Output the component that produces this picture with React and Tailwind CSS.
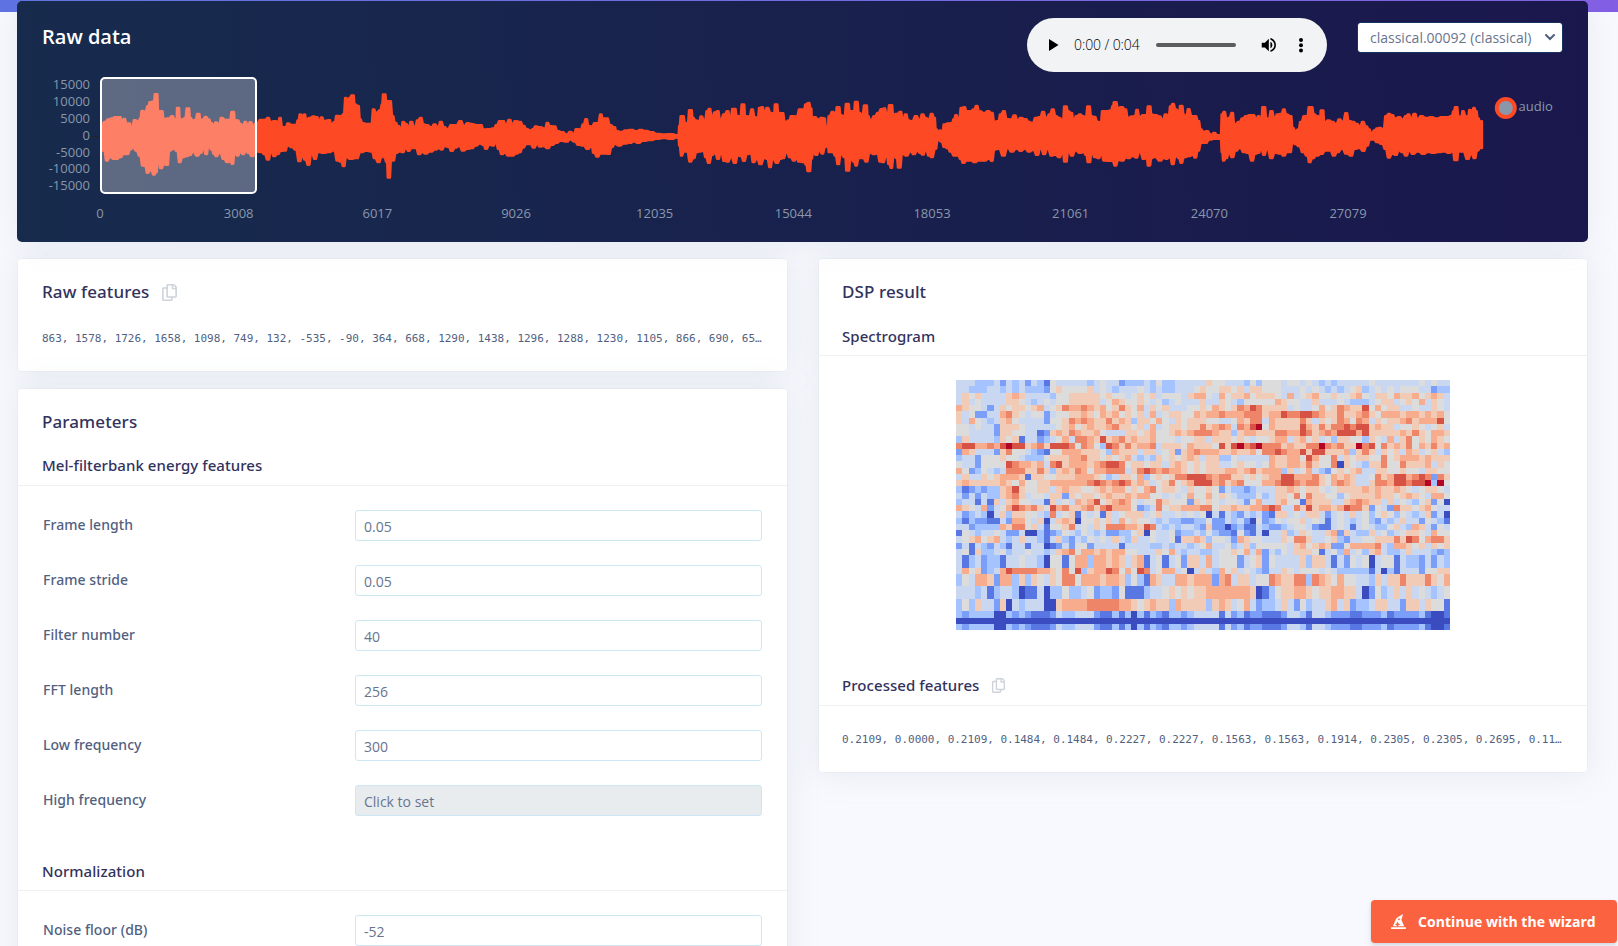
import React from "react";
import { FaRegCopy, FaHatWizard } from "react-icons/fa";

/* ---------- waveform envelope: "x,y" pairs per segment ---------- */
const SEGMENTS = [
  {
    x0: 0,
    k: 2.904,
    top: "295,370;305,362;315,355;325,352;335,348;348,348;355,366;361,353;368,367;375,367;383,381;391,357;402,361;408,352;412,329;422,331;430,315;436,303;447,301;451,279;456,279;459,330;470,330;476,353;490,352;500,345;508,355;513,354;515,320;519,320;522,354;530,355;538,350;544,322;548,322;552,350;560,358;568,356;574,338;578,338;582,360;590,355;597,347;606,355;613,366;620,374;627,364;635,370;644,350;655,356;668,356;674,332;678,332;682,357;690,358;698,368;706,375;712,362;720,373;727,363;735,372;745,366;758,356;768,356;779,350;786,362;798,360;808,362;813,350;820,378;830,378;836,367;848,371;860,371;866,358;872,340;880,344;884,340;890,355;900,350;910,346;920,348;926,362;934,349;942,360;950,358;957,357;962,372;972,363;978,344;990,345;998,340;1004,290;1010,300;1016,290;1022,283;1026,283;1030,310;1040,314;1046,355;1052,366;1065,368;1078,368;1085,325;1092,335;1104,328;1110,310;1113,280;1118,280;1122,300;1133,300;1140,345;1148,365;1157,375;1164,390;1171,362;1178,368;1187,378;1194,362;1205,380;1213,358;1222,350;1230,370;1240,372;1252,378;1262,370;1272,378;1280,362;1290,378;1300,384;1311,372;1325,372;1337,360;1348,374;1358,366;1368,368;1376,370;1384,372;1397,372;1404,385;1420,384;1434,382;1442,372;1452,360;1462,360;1468,372;1480,356;1488,370;1497,360;1510,362;1520,374;1530,384;1540,388;1548,384;1556,376",
    bottom: "295,455;302,455;310,485;320,475;330,480;338,480;350,475;358,466;370,466;378,452;386,446;396,455;406,470;415,500;422,502;428,522;438,514;447,527;454,520;458,478;468,508;476,497;486,498;492,455;505,450;514,456;522,490;530,475;542,472;552,468;560,458;573,470;583,462;590,445;599,466;606,440;615,452;622,465;628,472;638,462;650,480;660,490;668,488;675,495;682,460;690,470;698,458;706,466;714,456;722,462;732,472;745,458;760,460;768,466;778,482;788,458;796,472;806,466;816,456;828,455;835,440;848,445;858,452;870,487;878,468;886,482;896,498;905,462;915,480;924,460;940,462;955,460;970,455;980,485;990,488;998,502;1006,475;1018,480;1035,478;1048,460;1065,456;1080,458;1088,478;1100,490;1108,475;1115,475;1124,490;1127,536;1131,536;1136,485;1142,485;1150,462;1160,458;1170,460;1178,446;1187,456;1195,448;1208,448;1217,466;1228,460;1235,464;1250,458;1265,452;1275,448;1282,452;1292,442;1302,444;1312,456;1322,446;1334,442;1344,455;1358,450;1370,448;1382,440;1394,434;1404,438;1411,450;1422,438;1432,440;1440,430;1448,450;1458,466;1466,462;1476,470;1488,470;1500,464;1510,460;1518,446;1530,436;1540,436;1550,446;1560,436",
  },
  {
    x0: 540,
    k: 2.904,
    top: "0,378;15,382;21,365;30,375;42,376;52,390;65,393;78,400;88,392;98,398;106,384;118,385;126,370;134,354;142,375;150,376;160,366;168,366;177,340;183,352;194,352;204,372;216,378;222,390;235,392;250,388;265,386;280,390;292,386;305,389;325,393;340,398;360,400;378,399;402,402;405,375;410,345;415,345;422,365;428,370;435,327;439,327;444,350;452,358;462,360;468,346;478,360;486,330;492,323;500,350;508,334;516,330;524,358;535,340;545,330;552,352;561,323;566,323;572,345;582,345;587,310;592,310;596,345;608,346;616,325;624,348;632,350;638,320;645,318;652,336;660,320;670,335;680,338;683,310;688,310;692,335;704,336;712,362;724,358;730,345;745,346;755,325;766,325;772,310;780,305;787,322;790,350;798,348;808,355;818,350;826,352;830,375;834,390;840,345;850,332;858,350;863,318;868,318;873,342;884,345;890,308;895,308;900,330;912,330;916,302;921,302;926,335;936,340;943,313;948,313;952,345;960,358;972,345;982,335;992,324;1000,322;1008,345;1016,312;1021,312;1026,340;1036,338;1047,332;1054,360;1062,340;1070,358;1080,360;1092,345;1102,358;1111,340;1120,350;1128,355;1138,338;1145,350;1150,385;1158,398;1162,388;1168,395;1174,370;1185,367;1196,366;1202,355;1208,342;1216,358;1224,320;1232,318;1240,330;1250,330;1260,325;1268,314;1276,330;1290,335;1302,330;1312,335;1320,362;1330,360;1338,340;1347,330;1356,354;1368,355;1378,343;1388,358;1396,350;1410,354;1420,362;1430,365;1440,350;1452,348;1461,332;1470,352;1480,340;1489,325;1498,345;1508,350;1518,360;1524,316;1528,316;1533,330;1543,335;1550,362;1558,345",
    bottom: "0,443;10,442;22,448;34,438;48,432;60,426;78,428;88,422;100,428;112,438;125,440;138,450;150,442;156,462;167,473;176,464;188,464;200,465;208,445;218,436;230,440;245,434;262,432;272,428;285,432;300,426;320,424;340,420;360,418;380,420;402,416;405,440;411,470;418,458;427,458;436,488;446,478;455,460;465,458;474,456;482,475;490,492;500,468;508,462;517,480;526,460;535,486;545,488;555,475;566,492;575,470;584,472;592,486;602,466;612,464;620,490;630,480;640,496;652,478;660,480;668,505;676,480;688,492;698,480;706,478;716,460;726,475;738,485;745,475;752,488;766,490;774,498;778,517;783,517;788,480;794,460;802,468;812,455;820,464;828,445;834,420;840,460;850,460;858,470;866,496;874,466;886,475;891,515;896,515;902,480;912,488;918,500;926,478;938,478;948,488;958,462;970,466;980,464;988,488;996,490;1006,468;1014,496;1020,507;1028,470;1036,478;1041,506;1045,506;1052,465;1064,470;1076,458;1086,466;1096,456;1104,462;1112,467;1120,452;1130,470;1138,475;1148,450;1156,422;1166,428;1174,444;1184,448;1192,458;1204,470;1214,470;1222,480;1229,492;1240,485;1252,485;1262,490;1275,485;1290,485;1304,480;1312,486;1320,452;1332,450;1346,470;1358,448;1370,458;1384,450;1396,456;1408,450;1420,458;1432,454;1444,468;1454,448;1464,466;1474,450;1486,470;1496,468;1508,475;1518,458;1524,488;1528,488;1534,456;1545,470;1555,455",
  },
  {
    x0: 1080,
    k: 2.914,
    top: "0,340;8,345;17,348;23,316;27,316;33,345;42,347;52,362;60,364;66,330;78,330;90,328;96,315;100,303;105,303;110,320;122,318;132,325;140,350;152,346;160,345;166,326;174,348;184,342;194,342;199,316;204,316;208,340;220,342;232,346;240,358;250,340;258,345;264,316;271,308;279,325;288,335;293,314;297,314;302,340;309,350;316,324;326,345;336,345;345,360;352,385;360,392;370,390;382,400;392,395;400,402;410,402;414,340;420,332;428,355;434,350;444,335;450,370;464,362;474,352;484,345;495,342;505,342;514,355;520,345;528,360;533,318;538,318;543,350;548,362;558,330;567,352;576,340;586,338;594,325;602,340;614,345;620,380;628,390;636,385;644,362;654,345;662,345;668,318;675,318;682,340;692,345;698,362;703,328;708,328;712,365;724,358;736,362;746,368;756,355;766,362;776,336;784,360;796,362;806,368;816,376;824,362;834,376;842,385;850,398;858,388;866,382;874,380;884,385;892,345;900,338;910,342;918,352;930,348;940,355;950,345;957,340;965,352;975,338;984,355;994,345;1010,350;1024,348;1040,352;1054,348;1070,348;1082,345;1090,330;1094,318;1098,318;1103,345;1110,350;1116,330;1124,345;1130,348;1136,326;1142,330;1148,320;1154,330;1160,352;1166,362;1171,360",
    bottom: "0,462;10,460;18,468;24,490;28,490;34,458;44,475;54,478;62,462;70,485;82,486;94,486;103,500;112,484;124,485;134,476;142,478;154,472;164,476;174,460;186,480;194,475;199,500;203,500;208,478;218,475;234,485;244,478;252,480;262,475;270,496;280,470;288,478;295,492;304,475;318,472;328,468;336,476;344,455;354,432;366,432;378,422;392,420;410,420;414,460;418,485;426,478;434,462;444,475;454,455;466,448;478,460;490,462;502,485;510,465;520,462;528,450;536,468;545,450;558,478;568,462;584,464;594,470;604,460;612,460;620,430;628,436;638,442;650,460;662,470;669,490;678,478;690,470;704,465;716,455;728,455;740,470;750,460;764,450;776,464;790,470;800,450;814,448;826,456;836,440;846,422;856,422;866,430;880,435;890,450;900,476;910,465;920,468;930,455;940,460;950,470;960,456;970,465;985,458;1000,465;1015,460;1030,462;1045,460;1060,458;1075,462;1086,458;1093,484;1098,484;1103,458;1116,458;1130,480;1140,465;1150,478;1158,455;1166,448;1171,448",
  },
];

// Each envelope point becomes a short plateau, so the outline reads as packed bars.
function edge(side, inset) {
  const pts = SEGMENTS.flatMap((s) =>
    s[side].split(";").map((p) => {
      const [x, y] = p.split(",").map(Number);
      return [s.x0 + x / s.k, y / 3 + inset];
    })
  );
  const out = [];
  pts.forEach(([x, y], i) => {
    const left = i ? x - (x - pts[i - 1][0]) * 0.28 : x;
    const right = i < pts.length - 1 ? x + (pts[i + 1][0] - x) * 0.28 : x;
    out.push(`${left.toFixed(1)} ${y.toFixed(1)}`, `${right.toFixed(1)} ${y.toFixed(1)}`);
  });
  return out;
}
const WAVE = "M" + [...edge("top", 1.3), ...edge("bottom", -1.3).reverse()].join("L") + "Z";

const Y_TICKS = [
  ["15000", 84.5], ["10000", 101.3], ["5000", 118.5], ["0", 135.5],
  ["-5000", 151.8], ["-10000", 168.6], ["-15000", 185.5],
];
const X_TICKS = ["0", "3008", "6017", "9026", "12035", "15044", "18053", "21061", "24070", "27079"];

function Chart() {
  return (
    <svg className="block" width="1571" height="168" viewBox="17 74 1571 168" fontFamily='"Open Sans", "Noto Sans", sans-serif' fontSize="13" fill="#8898aa">
      <path d="M90 136.5H101" stroke="#212529" strokeWidth="1" />
      <path d={WAVE} fill="#fd4924" stroke="#fd4924" strokeWidth="2.6" strokeLinejoin="round" />
      <rect x="101" y="78" width="155" height="115" rx="4" fill="#fff" fillOpacity="0.3" stroke="#fff" strokeWidth="2" />
      {Y_TICKS.map(([t, y]) => (
        <text key={t} x="90" y={y + 4.7} textAnchor="end">{t}</text>
      ))}
      {X_TICKS.map((t, i) => (
        <text key={t} x={100 + i * 138.67} y="218" textAnchor="middle">{t}</text>
      ))}
      <circle cx="1505.8" cy="108" r="9" fill="#8898aa" stroke="#fd4924" strokeWidth="4" />
      <text x="1518.5" y="111">audio</text>
    </svg>
  );
}

/* ---------- spectrogram ---------- */
const PALETTE = {
  0: "#3b4cc0", 1: "#5977e3", 2: "#7b9ff9", 3: "#a5c3fe", 4: "#c9d7f0", 5: "#dddcdc",
  6: "#f2cbb7", 7: "#f7ac8e", 8: "#ee8468", 9: "#d65244", a: "#b40426",
};
const LOW = "3233330032 3211124334 4421131303 132133234 4441423122 1112443144 3222112223 1222231001";
const A = "4134233144 5443055157 7377676467 145145266 4745552456 2544446366 4142545045 5143324243";
const B = "3547762773 6365465885 7776776353 176447767 7727846645 5876688387 6575544364 6686668657";
const C = "4443413443 0114033533 4523325111 344565656 6777777760 1356677656 6776640253 4646454345";
const D = "3536442604 3444006777 7888887765 676637666 6367645742 3346425344 6746233466 4426646551";
const ROWS = [
  "4443334243 4243154444 4345442333 435334444 4655444353 5554554543 4344444544 4444454544",
  "4433344343 4333256555 5645434445 434334445 6556656466 5554445454 3434563454 5455544233",
  "4656444467 6444435566 6665655456 564555467 7547566756 6654745675 5655675466 5766756764",
  "4645444466 5434545566 6664576556 545345444 6446543555 5576554464 4454333456 6456574654",
  "7655424656 6567456877 8767568657 465644455 6576568798 6666454457 5687669575 6644544654",
  "6452244786 5455245566 7657675656 474566557 6778777888 6779889987 6686678657 7767767675",
  "6475434675 4444255687 8766867636 657546566 6554457688 4766668646 5687587465 6678677795",
  "5545442666 5444445675 6766786656 474566566 867874879a 5766669768 6889899676 6455654564",
  "5544442665 5441267687 6675444665 675567678 8876636776 6688779867 8799979666 6676865776",
  "3644443656 1442345748 8769678676 675554556 6466656545 5677467564 5366553654 7468565765",
  "89977879a9 9678699985 8753986867 784666576 665969a89a 888676688a 87866a8958 6768576867",
  "2764442685 5432155777 6665376664 664562678 7776676675 8898779699 6667368646 5647645643",
  "3442555655 4333566677 8665656743 436565676 4663354444 4766775975 5846566558 5677767666",
  "5442555598 7767489677 7678998566 566467656 5664456554 5766776865 5806543668 5586667465",
  "7523543488 8668636768 7577888468 987877656 5666776786 7773645743 2565674466 5565546655",
  "4644656777 6166556667 7765346657 356568899 9878866565 6779977786 5767644586 7997898286",
  "6766666765 7556677777 7898789867 645685679 9978678555 7789987886 5787644688 799899a3a5",
  "3123233679 6556646766 5567677565 785665465 5652433234 4466765665 4566667676 6765456654",
  "4242433678 6455466265 6656766767 755454575 5756543335 3466585866 5535666676 6567654775",
  "3441416467 5544164547 6795678754 558655526 5654554257 4467551766 6446787664 6454356250",
  "7654724579 8786597866 7868977752 348566777 8856676677 8984486967 7679886254 2866567544",
  "4234304636 6554384561 5451645666 456445454 5041432434 2166454664 2454645356 5354346240",
  "3132211427 7546046760 5565647565 543433223 3522434205 2354556454 1454345324 3464425431",
  "4423333768 8564155684 5465888776 984343443 2622023114 3223455421 1454145433 5643764254",
  "1543445422 4003123543 5434223356 054452334 3532215214 0446346544 6726433645 3456654755",
  "4567567434 6443146324 3545464364 454451667 6355427655 4446588644 5632445566 6869857886",
  "2414324314 4144012425 5244441444 433434434 5744534635 5555467567 6225777784 3776564656",
  "4516334534 4544346785 7767677554 446574344 3345565747 2435466651 4537453674 3346444323",
  A, A,
  "4756234798 8887765859 3677985759 845774504 6437564543 2446545554 5433333140 3144425566",
  B, B, C, C, D, D, LOW,
  "0".repeat(79),
  LOW,
].map((r) => r.replace(/ /g, ""));

function Spectrogram() {
  return (
    <svg className="block" width="494" height="250" viewBox="0 0 79 40" preserveAspectRatio="none" shapeRendering="crispEdges">
      {ROWS.map((row, y) =>
        [...row].map((c, x) => <rect key={x + "-" + y} x={x} y={y} width="1" height="1" fill={PALETTE[c]} />)
      )}
    </svg>
  );
}

/* ---------- pieces ---------- */
function AudioPlayer() {
  return (
    <div className="flex h-[54px] w-[300px] items-center rounded-full bg-[#f1f3f4] pl-[22px]">
      <svg className="block" width="10" height="12" viewBox="0 0 10 12"><path d="M0 0L9.5 6L0 12Z" fill="#000" /></svg>
      <span className="ml-[15px] w-[67px] whitespace-nowrap text-[14px] font-light leading-[20px] tracking-[-0.1px] text-black">0:00 / 0:04</span>
      <span className="ml-[15px] h-1 w-[80px] rounded-full bg-[#5b5c5c]" />
      <svg className="ml-[22px] block" width="22" height="22" viewBox="0 0 24 24">
        <path d="M3 9v6h4l5 5V4L7 9H3zm13.500 3c0-1.770-1.020-3.290-2.500-4.030v8.050c1.480-.73 2.500-2.250 2.500-4.020zM14 3.230v2.060c2.890.86 5 3.540 5 6.710s-2.110 5.850-5 6.710v2.060c4.010-.91 7-4.490 7-8.770s-2.990-7.860-7-8.770z" fill="#000" transform="translate(1.500 1.700) scale(.86)" />
      </svg>
      <svg className="ml-[18px] block" width="6" height="16" viewBox="0 0 6 16">
        <circle cx="3" cy="3" r="2" /><circle cx="3" cy="8.200" r="2" /><circle cx="3" cy="13.400" r="2" />
      </svg>
    </div>
  );
}

function Card({ className = "", children }) {
  return (
    <section className={"rounded-[5px] bg-white shadow-[0_0_32px_0_rgba(136,152,170,0.17)] border border-black/[0.02] bg-clip-padding " + className}>
      {children}
    </section>
  );
}

function Field({ label, value, disabled }) {
  return (
    <div className="flex h-[31px] items-center">
      <label className="w-[313px] pb-px pl-px font-['Noto_Sans',sans-serif] text-[14px] font-medium leading-5 tracking-[0.05px]">{label}</label>
      <div className={"flex h-[31px] w-[407px] items-center rounded-[3px] border border-[#cde7f4] pl-2 pt-px text-[14px] text-[#68748e] " + (disabled ? "bg-[#e9ecef]" : "bg-white")}>
        {value}
      </div>
    </div>
  );
}

const FIELDS = [
  ["Frame length", "0.05"], ["Frame stride", "0.05"], ["Filter number", "40"],
  ["FFT length", "256"], ["Low frequency", "300"], ["High frequency", "Click to set", true],
];

const MONO = "whitespace-nowrap font-['DejaVu_Sans_Mono',monospace] text-[11px] leading-4 tracking-[-0.02px] text-[#525f7f]";
const H2 = "font-['Noto_Sans',sans-serif] text-[17px] font-medium leading-6 tracking-[0.1px] text-[#32325d]";
const H3 = "font-['Noto_Sans',sans-serif] text-[15px] font-medium leading-6 tracking-[0.06px] text-[#32325d]";

export default function App() {
  return (
    <div className="relative h-[946px] w-[1618px] overflow-hidden bg-[#f8f9fe] font-['Open_Sans','Noto_Sans',sans-serif] text-[#525f7f]">
      <div className="h-3 bg-gradient-to-r from-[#5e72e4] to-[#825ee4]" />
      <section className="relative ml-[17px] -mt-[11px] h-[241px] w-[1571px] rounded-[5px] bg-[linear-gradient(87deg,#172b4d,#1a174d)] shadow-[0_0_32px_0_rgba(136,152,170,0.15)]">
        <div className="flex h-[73px] items-start pl-[25px] pt-[17px]">
          <h1 className="mt-[5px] w-[985px] text-[20px] font-semibold leading-7 text-white">Raw data</h1>
          <AudioPlayer />
          <div className="ml-[30px] mt-[4px] flex h-[31px] w-[206px] items-center rounded-[3px] border border-[#17335f] bg-white pl-[12px] text-[14px] text-[#68748e] bg-clip-padding">
            <span className="w-[175px] whitespace-nowrap">classical.00092 (classical)</span>
            <svg className="block" width="10" height="7" viewBox="0 0 10 7"><path d="M1 1l4 4 4-4" fill="none" stroke="#525f7f" strokeWidth="2" strokeLinecap="round" /></svg>
          </div>
        </div>
        <Chart />
      </section>

      <div className="mt-4 flex items-start gap-[30px] pl-[17px]">
        <div className="flex w-[771px] flex-col gap-4">
          <Card className="h-[114px] pl-6 pt-[21px]">
            <div className="flex items-center gap-3">
              <h2 className={H2}>Raw features</h2>
              <FaRegCopy className="text-[#ced4da]" size={17} />
            </div>
            <p className={MONO + " mt-[27px]"}>863, 1578, 1726, 1658, 1098, 749, 132, -535, -90, 364, 668, 1290, 1438, 1296, 1288, 1230, 1105, 866, 690, 65…</p>
          </Card>
          <Card className="h-[640px]">
            <h2 className={H2 + " mt-[21px] pl-6"}>Parameters</h2>
            <h3 className={H3 + " mt-[19px] border-b border-[#eef0f2] pb-2 pl-6"}>Mel-filterbank energy features</h3>
            <div className="mt-6 flex flex-col gap-6 pl-6">
              {FIELDS.map(([l, v, d]) => <Field key={l} label={l} value={v} disabled={d} />)}
            </div>
            <h3 className={H3 + " mt-[43px] border-b border-[#eef0f2] pb-[7px] pl-6"}>Normalization</h3>
            <div className="mt-6 pl-6"><Field label="Noise floor (dB)" value="-52" /></div>
          </Card>
        </div>

        <Card className="h-[515px] w-[770px]">
          <h2 className={H2 + " mt-[21px] pl-[23px]"}>DSP result</h2>
          <h3 className={H3 + " mt-5 border-b border-[#eef0f2] pb-[7px] pl-[23px]"}>Spectrogram</h3>
          <div className="mt-6 flex justify-center"><Spectrogram /></div>
          <div className="mt-[43px] flex items-center gap-3 border-b border-[#eef0f2] pb-2 pl-[23px]">
            <h3 className={H3}>Processed features</h3>
            <FaRegCopy className="text-[#ced4da]" size={15} />
          </div>
          <p className={MONO + " mt-[26px] pl-[23px]"}>0.2109, 0.0000, 0.2109, 0.1484, 0.1484, 0.2227, 0.2227, 0.1563, 0.1563, 0.1914, 0.2305, 0.2305, 0.2695, 0.11…</p>
        </Card>
      </div>

      <button className="absolute left-[1371px] top-[900px] flex h-[43px] w-[246px] items-center rounded-[4px] bg-[#fb6340] pl-5 text-[14px] font-bold text-white shadow-[0_4px_6px_rgba(50,50,93,0.11),0_1px_3px_rgba(0,0,0,0.08)]">
        <FaHatWizard size={15} />
        <span className="ml-3 whitespace-nowrap tracking-[0.05px]">Continue with the wizard</span>
      </button>
    </div>
  );
}
